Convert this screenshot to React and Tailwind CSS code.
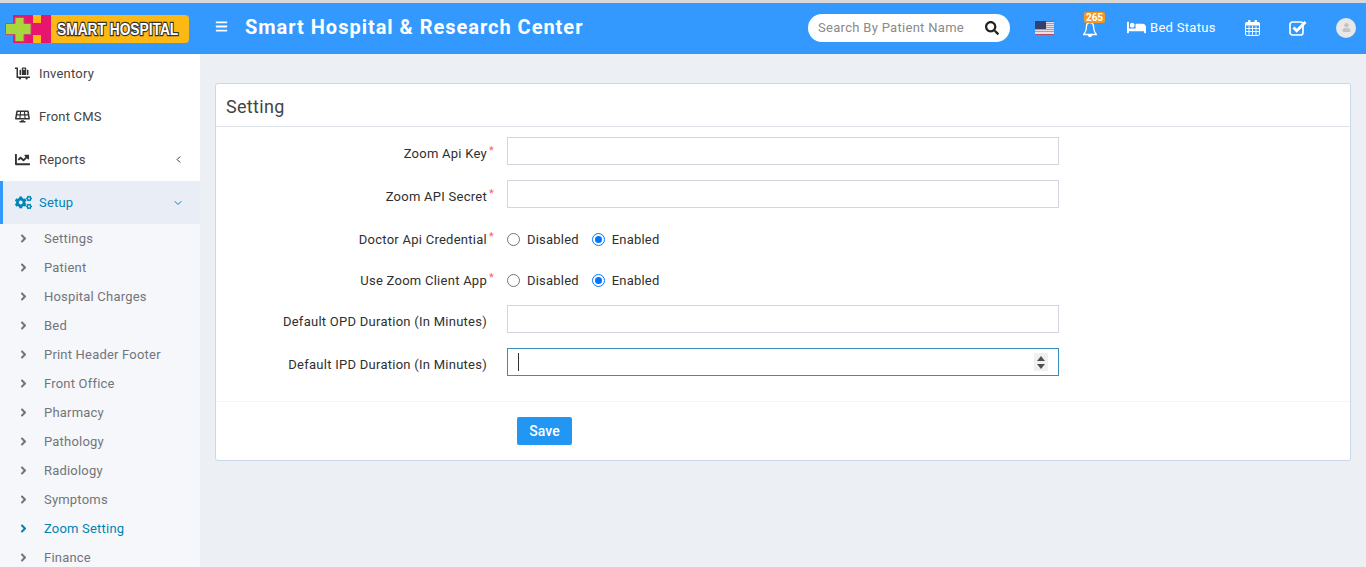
import { FaBars, FaSearch, FaBed, FaLuggageCart, FaSolarPanel, FaChartLine, FaCogs, FaAngleRight, FaUser } from 'react-icons/fa'
import { FiChevronLeft, FiChevronDown } from 'react-icons/fi'

const SUB_ITEMS = ['Settings', 'Patient', 'Hospital Charges', 'Bed', 'Print Header Footer', 'Front Office', 'Pharmacy', 'Pathology', 'Radiology', 'Symptoms', 'Zoom Setting', 'Finance']

const Logo = () => (
  <svg width="184" height="28" viewBox="0 0 184 28" className="shrink-0">
    <rect x="40" y="0" width="144" height="28" rx="4" fill="#fdb813" />
    <rect x="8" y="0" width="38" height="28" fill="#e8156f" />
    <rect x="28" y="0" width="8" height="8" fill="#fdb813" />
    <rect x="28" y="20" width="8" height="8" fill="#fdb813" />
    <path d="M0.5 8.5h9.5V2.5h9v6h7v11h-7v7h-9v-7H0.5z" fill="#a9d63c" stroke="#b8507a" strokeWidth="1" />
    <g transform="translate(52 20) scale(0.81 1)">
      <text fontFamily="'Liberation Sans', sans-serif" fontWeight="700" fontSize="17" fill="#fff" stroke="#333" strokeWidth="2.4" paintOrder="stroke">SMART HOSPITAL</text>
    </g>
  </svg>
)

const Flag = () => (
  <svg width="19" height="14" viewBox="0 0 19 14" className="shrink-0">
    <rect width="19" height="14" fill="#e9dfe6" />
    <rect y="0" width="19" height="1" fill="#c0485f" />
    <rect y="2" width="19" height="1" fill="#cf8a9c" />
    <rect y="4" width="19" height="1" fill="#cf8a9c" />
    <rect y="6" width="19" height="1" fill="#cf8a9c" />
    <rect y="8" width="19" height="1" fill="#cf8a9c" />
    <rect y="10" width="19" height="1" fill="#cf8a9c" />
    <rect y="13" width="19" height="1" fill="#c0485f" />
    <rect width="11" height="8" fill="#34406f" />
  </svg>
)

const BellIcon = () => (
  <svg width="14" height="17" viewBox="0 0 14 17" fill="none" stroke="#fff" strokeWidth="1.3" className="block">
    <path d="M7 1.5C4.5 1.5 3.4 3.4 3.4 6c0 3.5-.9 5.4-2.7 7.5h12.600C11.500 11.400 10.600 9.500 10.600 6c0-2.600-1.100-4.500-3.600-4.500z" />
    <path d="M5.500 14.500a1.600 1.600 0 0 0 3 0z" fill="#fff" />
  </svg>
)

const CalendarIcon = () => (
  <svg width="15" height="16" viewBox="0 0 15 16" fill="none" className="shrink-0">
    <rect x="0.500" y="2.500" width="14" height="13" rx="1.500" stroke="#fff" />
    <rect x="0.500" y="2.500" width="14" height="3" fill="#fff" />
    <rect x="3" y="0" width="2.500" height="4" rx="1" fill="#fff" />
    <rect x="9.500" y="0" width="2.500" height="4" rx="1" fill="#fff" />
    <path d="M4 6v9M7.500 6v9M11 6v9M1 8.500h13M1 11.500h13" stroke="#fff" strokeWidth="0.900" />
  </svg>
)

const CheckIcon = () => (
  <svg width="18" height="16" viewBox="0 0 18 16" fill="none" className="shrink-0">
    <rect x="1" y="2" width="13" height="13" rx="2.500" stroke="#fff" strokeWidth="1.700" />
    <path d="M4.500 7.500l3.200 3.200L16.500 2" stroke="#fff" strokeWidth="2.800" />
  </svg>
)

const MenuItem = ({ icon, label, caret, active, className }) => (
  <div className={`flex items-center shrink-0 text-[13px] tracking-[0.2px] ${active ? 'bg-[#e9edf5] text-[#0084b4] border-l-[3px] border-[#3399ff] pl-3 pr-4' : 'text-[#444] pl-[15px] pr-4'} ${className || 'h-[43px]'}`}>
    <span className={`w-[24px] ${active ? 'text-[17px] text-[#0084b4]' : 'text-[15px] text-[#333]'}`}>{icon}</span>
    <span className="flex-1">{label}</span>
    {caret}
  </div>
)

const Field = ({ label, required, children, radio }) => (
  <div className="flex items-center">
    <div className={`w-[271px] shrink-0 text-right text-[13px] leading-[20px] tracking-[0.26px] text-[#2f2f2f] ${radio ? 'translate-y-[1px]' : 'pt-[6px]'}`}>{label}</div>
    <div className={`w-[20px] shrink-0 pl-[2px] self-start text-[11px] text-[#ff5a6e] leading-[14px] ${radio ? 'pt-[1px]' : 'pt-[7px]'}`}>{required ? '*' : ''}</div>
    {children}
  </div>
)

const Input = ({ focused }) => (
  <div className={`relative w-[552px] h-[28px] bg-white border ${focused ? 'border-[#3c8dbc]' : 'border-[#d2d6de]'}`}>
    {focused && (
      <>
        <span className="absolute left-[10px] top-[4px] h-[18px] w-px bg-[#333]" />
        <span className="absolute right-[10px] top-[4px] w-[14px] h-[18px] bg-[#f0f0f0] flex flex-col items-center justify-center gap-[3px]">
          <span className="w-0 h-0 border-x-[4px] border-x-transparent border-b-[5px] border-b-[#505050]" />
          <span className="w-0 h-0 border-x-[4px] border-x-transparent border-t-[5px] border-t-[#505050]" />
        </span>
      </>
    )}
  </div>
)

const Radio = ({ checked, label }) => (
  <label className="flex items-center gap-[7px] text-[13px] leading-[20px] tracking-[0.2px] text-[#2f2f2f]">
    {checked ? (
      <span className="w-[13px] h-[13px] rounded-full border-[1.5px] border-[#0075ff] flex items-center justify-center">
        <span className="w-[7px] h-[7px] rounded-full bg-[#0075ff]" />
      </span>
    ) : (
      <span className="w-[13px] h-[13px] rounded-full border border-[#767676] bg-white" />
    )}
    <span className="translate-y-[1px]">{label}</span>
  </label>
)

const RadioPair = () => (
  <div className="flex items-center gap-[13px]">
    <Radio label="Disabled" />
    <Radio label="Enabled" checked />
  </div>
)

export default function App() {
  return (
    <div className="h-[567px] overflow-hidden flex flex-col bg-[#ecf0f5] font-['Roboto',sans-serif]">
      <div className="h-[3px] bg-[#d8d8d8] shrink-0" />
      <header className="h-[51px] shrink-0 bg-[#3399ff] text-white flex items-center">
        <div className="w-[200px] pl-[5px] shrink-0 flex items-center"><Logo /></div>
        <FaBars className="ml-[15px] mb-[4px] text-[13px]" />
        <div className="ml-[17px] mb-[4px] text-[20px] font-bold tracking-[0.98px]">Smart Hospital &amp; Research Center</div>
        <div className="ml-auto mb-[2px] flex items-center">
          <div className="w-[202px] h-[28px] rounded-full bg-white flex items-center justify-between pl-[10px] pr-[11px] text-[13px] text-[#8a8a8a] tracking-[0.3px]">
            <span>Search By Patient Name</span>
            <FaSearch className="text-[14px] text-[#222]" />
          </div>
          <div className="ml-[25px]"><Flag /></div>
          <div className="relative ml-[29px] mt-[3px]">
            <BellIcon />
            <span className="absolute left-[1px] top-[-9px] h-[11px] w-[21px] rounded-[2px] bg-[#f7971d] text-[10px] leading-[11px] font-bold text-center">265</span>
          </div>
          <div className="ml-[30px] flex items-center gap-[4px] text-[13px] tracking-[0.3px]">
            <FaBed className="text-[19px]" />
            <span className="w-[66px] whitespace-nowrap">Bed Status</span>
          </div>
          <div className="ml-[29px]"><CalendarIcon /></div>
          <div className="ml-[29px]"><CheckIcon /></div>
          <div className="ml-[29px] mr-[10px] w-[20px] h-[20px] rounded-full bg-[#e8e8e8] flex items-center justify-center text-[#c4c4c4]">
            <FaUser className="text-[9px]" />
          </div>
        </div>
      </header>
      <div className="flex flex-1 min-h-0">
        <aside className="w-[200px] shrink-0 flex flex-col overflow-hidden bg-white">
          <MenuItem icon={<FaLuggageCart />} label="Inventory" className="h-[41px] pb-[2px]" />
          <MenuItem icon={<FaSolarPanel />} label="Front CMS" />
          <MenuItem icon={<FaChartLine />} label="Reports" caret={<FiChevronLeft className="text-[11px] text-[#222]" />} />
          <MenuItem icon={<FaCogs />} label="Setup" active caret={<FiChevronDown className="text-[12px]" />} />
          <div className="bg-[#f5f7fa] flex-1">
            {SUB_ITEMS.map((item) => (
              <div key={item} className={`h-[29px] flex items-center pl-[19px] text-[13px] tracking-[0.2px] ${item === 'Zoom Setting' ? 'text-[#0084b4]' : 'text-[#73757a]'}`}>
                <FaAngleRight className="w-[9px] text-[13px] mr-[16px]" />
                {item}
              </div>
            ))}
          </div>
        </aside>
        <main className="flex-1 pt-[29px] pl-[15px] pr-[15px]">
          <div className="bg-white border border-[#c9d8e4] rounded-[3px] h-[378px] flex flex-col">
            <div className="h-[43px] shrink-0 border-b border-[#dde3e8] flex items-center pt-[2px] pl-[10px] text-[18px] tracking-[0.3px] text-[#444]">Setting</div>
            <div className="pt-[10px] flex flex-col">
              <Field label="Zoom Api Key" required><Input /></Field>
              <div className="h-[15px]" />
              <Field label="Zoom API Secret" required><Input /></Field>
              <div className="h-[21px]" />
              <Field label="Doctor Api Credential" required radio><RadioPair /></Field>
              <div className="h-[21px]" />
              <Field label="Use Zoom Client App" required radio><RadioPair /></Field>
              <div className="h-[15px]" />
              <Field label="Default OPD Duration (In Minutes)"><Input /></Field>
              <div className="h-[15px]" />
              <Field label="Default IPD Duration (In Minutes)"><Input focused /></Field>
            </div>
            <div className="mt-[25px] border-t border-[#f4f4f4] pt-[15px] pl-[301px]">
              <button className="w-[55px] h-[28px] bg-[#2196f3] rounded-[2px] text-white text-[14px] font-medium">Save</button>
            </div>
          </div>
        </main>
      </div>
    </div>
  )
}
